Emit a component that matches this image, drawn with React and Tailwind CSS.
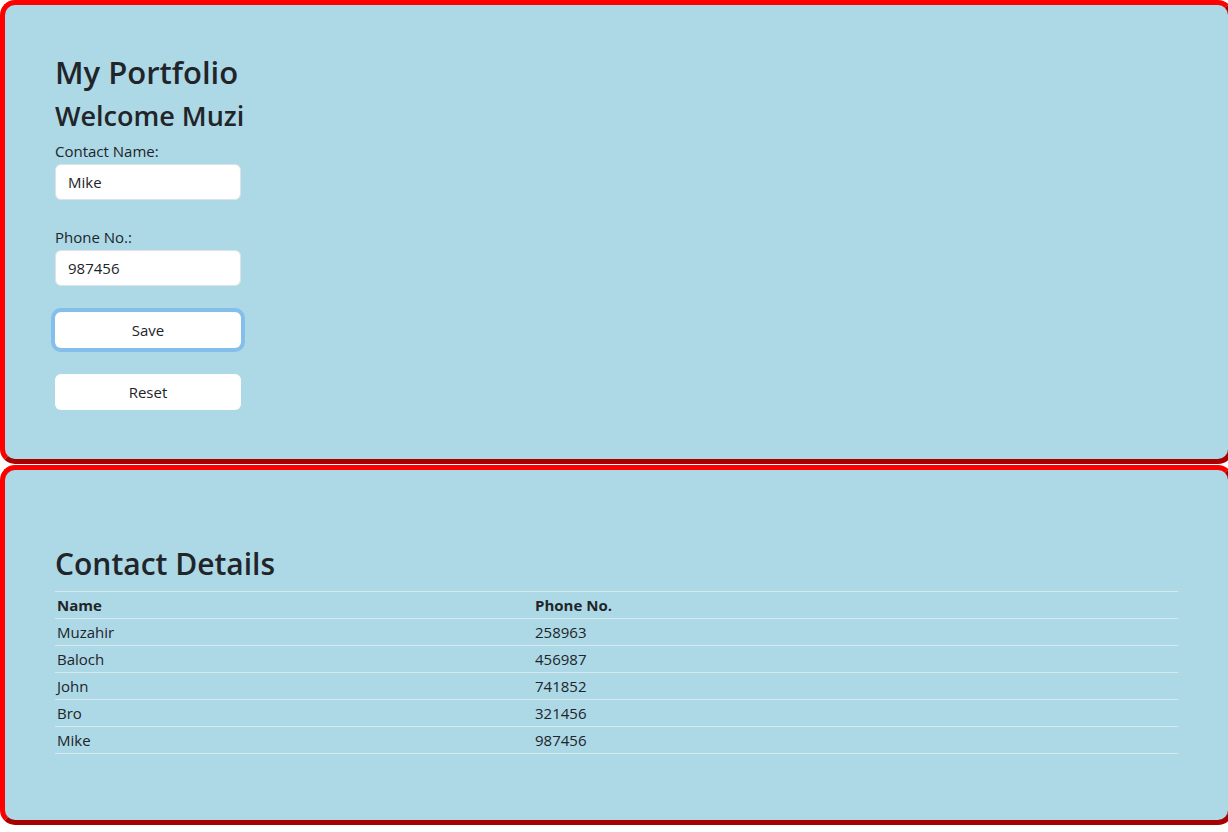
export default function App() {
  const contacts = [
    { name: "Muzahir", phone: "258963" },
    { name: "Baloch", phone: "456987" },
    { name: "John", phone: "741852" },
    { name: "Bro", phone: "321456" },
    { name: "Mike", phone: "987456" },
  ];

  const panel =
    "w-[1233px] rounded-[15px] border-[5px] border-t-[#ff0000] border-l-[#ff0000] border-r-[#a80000] border-b-[#a80000] bg-[#add8e6] px-[50px]";

  return (
    <div className="min-h-screen w-full overflow-hidden bg-white font-['Open_Sans',sans-serif] text-[#212529]">
      <section className={`${panel} h-[464px] pt-[48px]`}>
        <h2 className="mb-[8px] h-[38px] text-[31px] font-semibold leading-[38px]">My Portfolio</h2>
        <h3 className="mb-[6px] h-[34px] text-[27px] font-semibold leading-[34px]">Welcome Muzi</h3>

        <label className="block h-[24px] text-[15px] leading-[24px]">Contact Name:</label>
        <input
          className="mt-[1px] block h-[36px] w-[186px] rounded-[6px] border border-[#dee2e6] bg-white px-[12px] text-[15px] outline-none"
          defaultValue="Mike"
        />

        <label className="mt-[25px] block h-[24px] text-[15px] leading-[24px]">Phone No.:</label>
        <input
          className="mt-[1px] block h-[36px] w-[186px] rounded-[6px] border border-[#dee2e6] bg-white px-[12px] text-[15px] outline-none"
          defaultValue="987456"
        />

        <button className="mt-[26px] block h-[36px] w-[186px] rounded-[6px] bg-white text-[15px] shadow-[0_0_0_4px_rgba(13,110,253,0.25)]">
          Save
        </button>
        <button className="mt-[26px] block h-[36px] w-[186px] rounded-[6px] bg-white text-[15px]">
          Reset
        </button>
      </section>

      <section className={`${panel} mt-[1px] h-[360px] pt-[72px]`}>
        <h2 className="mb-[7px] h-[42px] text-[30px] font-semibold leading-[44px]">Contact Details</h2>
        <div className="border-t border-[#d6e9ef] text-[15px]">
          <div className="grid h-[27px] grid-cols-[478px_1fr] items-center border-b border-[#d6e9ef] font-bold">
            <div className="pl-[2px]">Name</div>
            <div className="pl-[2px]">Phone No.</div>
          </div>
          {contacts.map((c) => (
            <div key={c.name} className="grid h-[27px] grid-cols-[478px_1fr] items-center border-b border-[#d6e9ef]">
              <div className="pl-[2px]">{c.name}</div>
              <div className="pl-[2px]">{c.phone}</div>
            </div>
          ))}
        </div>
      </section>
    </div>
  );
}
